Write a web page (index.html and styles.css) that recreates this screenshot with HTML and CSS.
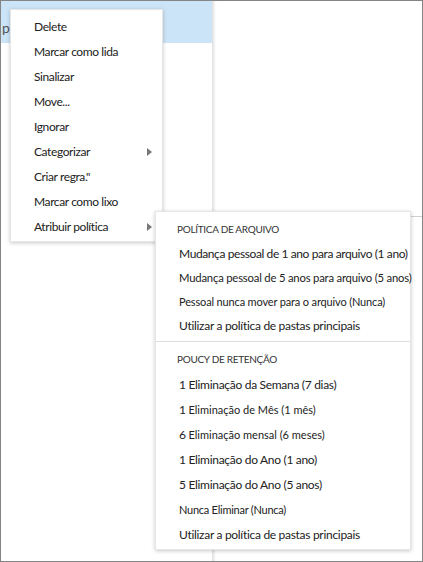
FILE: index.html
```html
<!DOCTYPE html>
<html lang="pt">
<head>
<meta charset="utf-8">
<link rel="stylesheet" href="styles.css">
</head>
<body>
<div class="frame">
  <div class="left-pane">
    <div class="row selected"><span class="row-text">p</span></div>
  </div>
  <div class="right-pane">
    <div class="right-top"></div>
  </div>

  <div class="menu main-menu">
    <div class="item">Delete</div>
    <div class="item">Marcar como lida</div>
    <div class="item">Sinalizar</div>
    <div class="item">Move...</div>
    <div class="item">Ignorar</div>
    <div class="item has-sub">Categorizar<span class="arrow"></span></div>
    <div class="item">Criar regra."</div>
    <div class="item">Marcar como lixo</div>
    <div class="item has-sub">Atribuir política<span class="arrow"></span></div>
  </div>

  <div class="menu sub-menu">
    <div class="header">POLÍTICA DE ARQUIVO</div>
    <div class="sitem s1 a1">Mudança pessoal de 1 ano para arquivo (1 ano)</div>
    <div class="sitem s1 a2">Mudança pessoal de 5 anos para arquivo (5 anos)</div>
    <div class="sitem s1 a3">Pessoal nunca mover para o arquivo (Nunca)</div>
    <div class="sitem s1">Utilizar a política de pastas principais</div>
    <div class="sep"></div>
    <div class="header">POUCY DE RETENÇÃO</div>
    <div class="sitem">1 Eliminação da Semana (7 dias)</div>
    <div class="sitem">1 <span class="xs">Eliminação de Mês (1 mês)</span></div>
    <div class="sitem">6 <span class="xs">Eliminação mensal (6 meses)</span></div>
    <div class="sitem">1 Eliminação do Ano (1 ano)</div>
    <div class="sitem">5 Eliminação do Ano (5 anos)</div>
    <div class="sitem nn">Nunca Eliminar (Nunca)</div>
    <div class="sitem">Utilizar a política de pastas principais</div>
  </div>
</div>
</body>
</html>
```

FILE: styles.css
```css
* { box-sizing: border-box; }
html, body { margin: 0; padding: 0; background: #fff; }
body {
  font-family: Lato, "Liberation Sans", Arial, sans-serif;
  color: #222;
}
.frame {
  position: relative;
  width: 423px;
  height: 562px;
  border: 1px solid #858585;
  display: flex;
  overflow: hidden;
}
.left-pane {
  width: 212px;
  border-right: 1px solid #e3e3e3;
  display: flex;
  flex-direction: column;
}
.row {
  height: 42px;
  display: flex;
  align-items: center;
  padding-left: 1px;
}
.row.selected { background: #cce4f7; }
.row-text {
  font-size: 14px;
  color: #555;
  padding-top: 10px;
}
.right-pane {
  flex: 1;
  box-shadow: inset 3px 0 3px -2px rgba(0,0,0,0.12);
}
.right-top {
  height: 216px;
  border-bottom: 1px solid #d0d0d0;
}
.menu {
  position: absolute;
  background: #fff;
  border: 1px solid #e6e6e6;
  box-shadow: 0 1px 4px rgba(0,0,0,0.22);
}
.main-menu {
  left: 9px;
  top: 8px;
  width: 153px;
  padding: 4px 0 2px;
}
.item {
  position: relative;
  height: 25px;
  line-height: 25px;
  padding-left: 23px;
  font-size: 12px;
  letter-spacing: -0.4px;
  color: #222;
  white-space: nowrap;
}
.arrow {
  position: absolute;
  right: 10px;
  top: 9px;
  width: 0;
  height: 0;
  border-top: 4px solid transparent;
  border-bottom: 4px solid transparent;
  border-left: 5px solid #777;
}
.sub-menu {
  left: 154px;
  top: 210px;
  width: 256px;
  padding: 5px 0 2px;
}
.header {
  height: 25px;
  line-height: 25px;
  padding-left: 21px;
  font-size: 10px;
  letter-spacing: -0.3px;
  color: #333;
  white-space: nowrap;
}
.sitem {
  height: 25px;
  line-height: 25px;
  padding-left: 23px;
  font-size: 12px;
  letter-spacing: -0.3px;
  color: #222;
  white-space: nowrap;
}
.sitem.s1 { height: 24px; line-height: 24px; }
.sitem.a1 { letter-spacing: -0.4px; }
.sitem.a2 { font-size: 11.3px; letter-spacing: -0.2px; }
.sitem.a3 { font-size: 11px; letter-spacing: -0.15px; }
.xs { font-size: 11px; letter-spacing: 0; }
.sitem.nn { font-size: 11px; letter-spacing: -0.25px; }
.sep {
  height: 1px;
  background: #dedede;
  margin: 3px 0 5px;
}
```
